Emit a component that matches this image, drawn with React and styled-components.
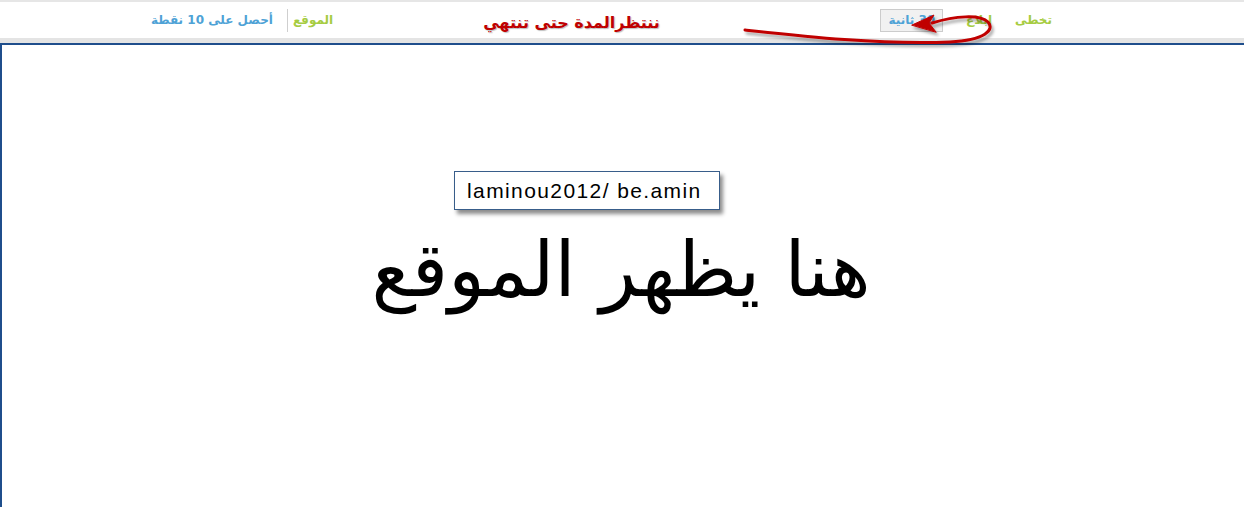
import React from 'react';
import styled, { createGlobalStyle } from 'styled-components';

const GlobalStyle = createGlobalStyle`
  html, body {
    margin: 0;
    padding: 0;
    background: #fff;
  }
`;

const Page = styled.div`
  width: 1244px;
  height: 507px;
  overflow: hidden;
  font-family: "DejaVu Sans", "Liberation Sans", sans-serif;
`;

const TopBar = styled.div`
  position: relative;
  height: 36px;
  border-top: 2px solid #e6e6e6;
  border-bottom: 5px solid #e4e4e4;
  display: flex;
  align-items: center;
  padding: 0 192px 0 151px;
  box-sizing: content-box;
`;

const Group = styled.div`
  display: flex;
  align-items: center;
  direction: rtl;
  gap: ${(p) => p.gap || 0}px;
  margin-left: ${(p) => (p.end ? 'auto' : '0')};
`;

const Link = styled.span`
  font-size: 12px;
  font-weight: bold;
  color: ${(p) => (p.green ? '#a6cc42' : '#4ea2d6')};
  white-space: nowrap;
`;

const Separator = styled.span`
  width: 1px;
  height: 23px;
  margin: 0 5px 0 14px;
  background: #cfcfcf;
`;

const Notice = styled.span`
  margin-left: 150px;
  margin-top: 4px;
  font-family: "DejaVu Sans", sans-serif;
  font-size: 16px;
  font-weight: bold;
  color: #c00000;
  direction: rtl;
  white-space: nowrap;
  text-shadow: 1px 1px 1px rgba(0, 0, 0, 0.25);
`;

const TimerButton = styled.span`
  box-sizing: border-box;
  height: 23px;
  padding: 0 7px 0 8px;
  display: flex;
  align-items: center;
  background: #f1f1f1;
  border: 1px solid #cccccc;
  font-size: 12px;
  font-weight: bold;
  color: #4ea2d6;
  white-space: nowrap;
`;

const Arrow = styled.svg`
  position: absolute;
  left: 0;
  top: 0;
  overflow: visible;
  pointer-events: none;
`;

const Frame = styled.div`
  height: 464px;
  border-top: 2px solid #1f4e8c;
  border-left: 2px solid #1f4e8c;
  display: flex;
  flex-direction: column;
  align-items: center;
`;

const Credit = styled.div`
  margin-top: 126px;
  margin-left: -72px;
  box-sizing: border-box;
  width: 266px;
  height: 39px;
  padding-left: 12px;
  display: flex;
  align-items: center;
  border: 1px solid #385d8a;
  background: #fff;
  box-shadow: 3px 4px 4px rgba(0, 0, 0, 0.45);
  font-family: "Liberation Sans", Arial, sans-serif;
  font-size: 21px;
  letter-spacing: 1.4px;
  color: #000;
`;

const Headline = styled.div`
  margin-top: 6px;
  margin-left: -4px;
  direction: rtl;
  font-family: "DejaVu Sans", sans-serif;
  font-size: 76px;
  line-height: 108px;
  color: #000;
  white-space: nowrap;
`;

export default function App() {
  return (
    <Page>
      <GlobalStyle />
      <TopBar>
        <Group>
          <Link green>الموقع</Link>
          <Separator />
          <Link>أحصل على 10 نقطة</Link>
        </Group>
        <Notice>ننتظرالمدة حتى تنتهي</Notice>
        <Group gap={23} end>
          <Link green>تخطى</Link>
          <Link green>إبلاغ</Link>
          <TimerButton>30 ثانية</TimerButton>
        </Group>
        <Arrow width="1244" height="50" viewBox="0 0 1244 50">
          <defs>
            <filter id="shade" x="-10%" y="-50%" width="120%" height="200%">
              <feDropShadow dx="2" dy="3" stdDeviation="1.5" floodColor="#000" floodOpacity="0.35" />
            </filter>
          </defs>
          <g filter="url(#shade)" fill="#c00000" stroke="#c00000" strokeLinecap="round">
            <path
              d="M745 28 C 800 34, 880 43, 950 40 C 985 38, 995 28, 988 20 C 980 12, 955 14, 932 21"
              fill="none"
              strokeWidth="3"
            />
            <path d="M912 23 L934 13 L929 21 L936 30 Z" strokeWidth="1" />
          </g>
        </Arrow>
      </TopBar>
      <Frame>
        <Credit>laminou2012/ be.amin</Credit>
        <Headline>هنا يظهر الموقع</Headline>
      </Frame>
    </Page>
  );
}
